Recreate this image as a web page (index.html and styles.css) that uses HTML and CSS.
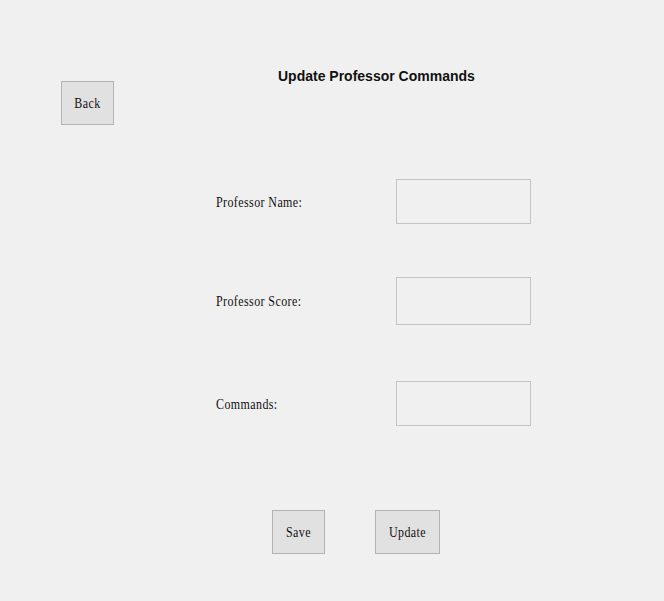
FILE: index.html
```html
<!DOCTYPE html>
<html>
<head>
<meta charset="utf-8">
<link rel="stylesheet" href="styles.css">
</head>
<body>
<div class="window">
  <div class="header">
    <button class="btn btn-back"><span class="mono">Back</span></button>
    <h1 class="title">Update Professor Commands</h1>
  </div>
  <div class="row row-1">
    <label class="label"><span class="mono">Professor Name:</span></label>
    <div class="input input-45"></div>
  </div>
  <div class="row row-2">
    <label class="label"><span class="mono">Professor Score:</span></label>
    <div class="input input-48"></div>
  </div>
  <div class="row row-3">
    <label class="label"><span class="mono">Commands:</span></label>
    <div class="input input-45"></div>
  </div>
  <div class="actions">
    <button class="btn btn-save"><span class="mono">Save</span></button>
    <button class="btn btn-update"><span class="mono">Update</span></button>
  </div>
</div>
</body>
</html>
```

FILE: styles.css
```css
html, body {
  margin: 0;
  padding: 0;
  background: #f0f0f0;
}
.window {
  width: 664px;
  height: 601px;
  background: #f0f0f0;
  overflow: hidden;
}
.mono {
  display: inline-block;
  font-family: "Liberation Serif", "Times New Roman", serif;
  font-size: 12px;
  line-height: 12px;
  color: #111;
  letter-spacing: 0.4px;
  transform: scaleY(1.15);
}
.header {
  display: flex;
  align-items: flex-start;
  padding-top: 68px;
}
.btn {
  box-sizing: border-box;
  height: 44px;
  padding: 0;
  margin: 0;
  background: #e1e1e1;
  border: 1px solid #b4b4b4;
  display: flex;
  align-items: center;
  justify-content: center;
}
.btn-back {
  width: 53px;
  margin-left: 61px;
  margin-top: 13px;
}
.title {
  margin: 0 0 0 164px;
  font-family: "Liberation Sans", Arial, sans-serif;
  font-weight: bold;
  font-size: 14px;
  line-height: 16px;
  color: #111;
}
.row {
  display: flex;
  align-items: center;
}
.row-1 { margin-top: 54px; }
.row-2 { margin-top: 53px; }
.row-3 { margin-top: 56px; }
.label {
  width: 180px;
  margin-left: 216px;
  display: flex;
  align-items: center;
}
.input {
  box-sizing: border-box;
  width: 135px;
  background: #f0f0f0;
  border: 1px solid #c4c4c4;
}
.input-45 { height: 45px; }
.input-48 { height: 48px; }
.actions {
  display: flex;
  gap: 50px;
  margin-top: 84px;
  margin-left: 272px;
}
.btn-save { width: 53px; }
.btn-update { width: 65px; }
```
